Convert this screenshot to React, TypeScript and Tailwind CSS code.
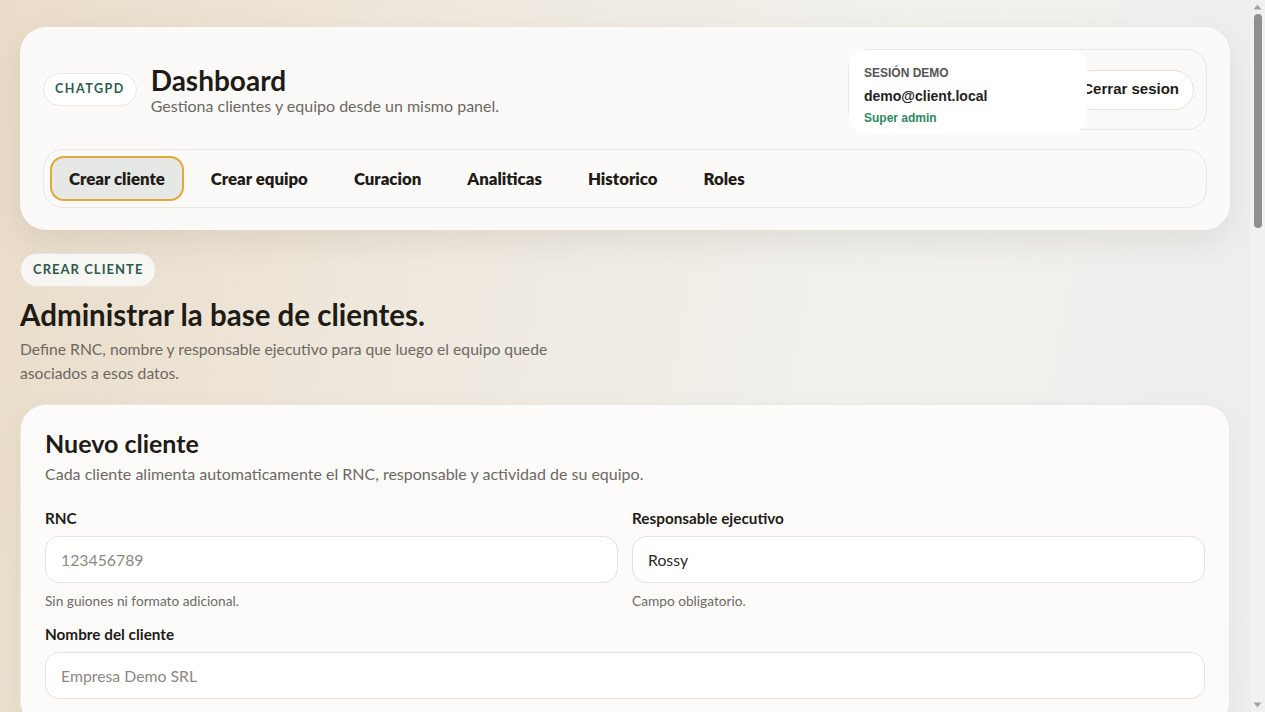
import React from 'react';

const tabs = ['Crear cliente', 'Crear equipo', 'Curacion', 'Analiticas', 'Historico', 'Roles'];

const Field: React.FC<{ label: string; placeholder?: string; value?: string; hint?: string }> = ({
  label,
  placeholder,
  value,
  hint,
}) => (
  <div className="flex flex-col">
    <label className="text-[15.3px] font-bold text-[#1f1b17] mb-[8px] leading-5">{label}</label>
    <input
      className="h-[47px] w-full rounded-[14px] border border-[#e4e2de] bg-white px-[15px] text-[15.8px] text-[#2b2825] placeholder:text-[#8c8884] outline-none"
      placeholder={placeholder}
      defaultValue={value}
    />
    {hint && <p className="mt-[10px] text-[13.7px] text-[#6f6a65] leading-4">{hint}</p>}
  </div>
);

// fake browser scrollbar, the capture hides the real one
const ScrollBar = () => (
  <div className="flex w-[15px] shrink-0 flex-col items-center bg-[#f1f1f1]">
    <svg width="15" height="14" viewBox="0 0 15 14" className="shrink-0">
      <path d="M3.5 9.5 L7.5 4.5 L11.5 9.5 Z" fill="#a3a3a3" />
    </svg>
    <div className="h-[214px] w-[8px] rounded-full bg-[#8f8f8f]" />
    <div className="flex-1" />
    <svg width="15" height="14" viewBox="0 0 15 14" className="shrink-0">
      <path d="M3.5 4.5 L7.5 9.5 L11.5 4.5 Z" fill="#a3a3a3" />
    </svg>
  </div>
);

export default function App() {
  return (
    <div
      className="flex h-[712px] bg-[linear-gradient(100deg,#e9dcc8_0%,#efe9df_35%,#f1f0ec_65%,#edefed_100%)] text-[#1f1b17]"
      style={{ fontFamily: '"Segoe UI", Lato, "Noto Sans", sans-serif' }}
    >
      <main className="flex-1 overflow-hidden px-5 pt-[27px]">
        {/* header */}
        <header className="rounded-[26px] bg-[#fbfaf8] px-[23px] pt-[22px] pb-[22px] shadow-[0_12px_30px_rgba(80,70,50,0.10)]">
          <div className="flex items-center justify-between h-[81px]">
            <div className="flex items-center gap-[14px]">
              <span className="rounded-full border border-[#ebe7e1] bg-white px-[11px] h-[33px] flex items-center text-[12.5px] font-bold tracking-[0.12em] text-[#2b5b4c]">
                CHATGPD
              </span>
              <div className="flex flex-col">
                <h1 className="text-[28px] font-bold leading-8 text-[#1f1b17]">Dashboard</h1>
                <p className="text-[16px] leading-5 text-[#6d6862]">Gestiona clientes y equipo desde un mismo panel.</p>
              </div>
            </div>
            <div className="flex items-center h-[81px] w-[359px] rounded-[20px] border border-[#ebe8e3] pr-[12px]">
              <div
                className="relative z-10 -mr-[16px] flex h-[83px] w-[238px] shrink-0 flex-col self-start rounded-[16px] bg-white px-[15px] pt-[15px]"
                style={{ fontFamily: '"Liberation Sans", Arial, sans-serif' }}
              >
                <span className="text-[12px] font-bold text-[#555555] leading-4">SESIÓN DEMO</span>
                <span className="mt-[5px] text-[14px] font-bold text-[#222222] leading-5">demo@client.local</span>
                <span className="mt-[4px] text-[12px] font-bold text-[#2e8a61] leading-4">Super admin</span>
              </div>
              <button
                className="h-[40px] flex-1 whitespace-nowrap rounded-full border border-[#e6e3de] bg-white pr-[14px] text-right text-[15px] font-bold text-[#1f1b17]"
                style={{ fontFamily: '"Liberation Sans", Arial, sans-serif' }}
              >
                Cerrar sesion
              </button>
            </div>
          </div>
          <nav className="mt-[19px] flex h-[59px] items-center gap-[8px] rounded-[20px] border border-[#ebe8e3] px-[6px]">
            {tabs.map((t, i) => (
              <button
                key={t}
                className={
                  i === 0
                    ? 'h-[45px] rounded-[14px] border-2 border-[#e2a83a] bg-[#e6e8e6] px-[17px] text-[16.8px] font-extrabold text-[#1f1b17]'
                    : 'h-[45px] rounded-[14px] border-2 border-transparent px-[17px] text-[16.8px] font-extrabold text-[#1f1b17]'
                }
              >
                {t}
              </button>
            ))}
          </nav>
        </header>

        {/* section intro */}
        <section className="mt-[23px]">
          <span className="inline-flex h-[34px] items-center rounded-full border border-[#e9e5de] bg-[#f8f6f2] px-[12px] text-[13px] font-bold tracking-[0.08em] text-[#2b5b4c]">
            CREAR CLIENTE
          </span>
          <h2 className="mt-[10px] text-[29.5px] font-bold leading-9 text-[#1f1b17]">Administrar la base de clientes.</h2>
          <p className="mt-[4px] max-w-[560px] text-[15.7px] leading-6 text-[#6d6862]">
            Define RNC, nombre y responsable ejecutivo para que luego el equipo quede asociados a esos datos.
          </p>
        </section>

        {/* form card */}
        <section className="mt-[19px] rounded-[26px] border border-[#ece9e4] bg-[#fcfbfa] px-[24px] pt-[22px] pb-[28px] shadow-[0_10px_30px_rgba(80,70,50,0.06)]">
          <h3 className="text-[25px] font-bold leading-8 text-[#1f1b17]">Nuevo cliente</h3>
          <p className="mt-[3px] text-[16px] leading-6 text-[#6d6862]">
            Cada cliente alimenta automaticamente el RNC, responsable y actividad de su equipo.
          </p>
          <div className="mt-[22px] grid grid-cols-2 gap-x-[14px]">
            <Field label="RNC" placeholder="123456789" hint="Sin guiones ni formato adicional." />
            <Field label="Responsable ejecutivo" value="Rossy" hint="Campo obligatorio." />
          </div>
          <div className="mt-[15px]">
            <Field label="Nombre del cliente" placeholder="Empresa Demo SRL" />
          </div>
        </section>
      </main>
      <ScrollBar />
    </div>
  );
}
